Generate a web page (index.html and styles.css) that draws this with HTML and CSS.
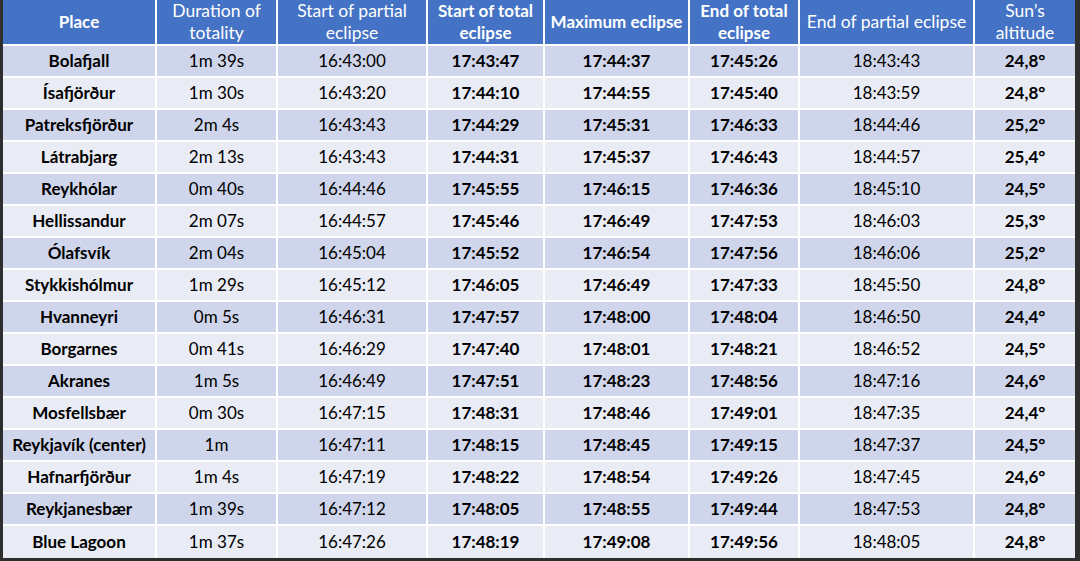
FILE: index.html
```html
<!DOCTYPE html>
<html>
<head>
<meta charset="utf-8">
<link rel="stylesheet" href="styles.css">
</head>
<body>
<div class="frame">
<table class="eclipse">
<colgroup>
<col class="c1"><col class="c2"><col class="c3"><col class="c4"><col class="c5"><col class="c6"><col class="c7"><col class="c8">
</colgroup>
<thead>
<tr>
<th class="b">Place</th>
<th>Duration of totality</th>
<th>Start of partial eclipse</th>
<th class="b">Start of total eclipse</th>
<th class="b">Maximum eclipse</th>
<th class="b">End of total eclipse</th>
<th>End of partial eclipse</th>
<th>Sun’s altitude</th>
</tr>
</thead>
<tbody>
<tr><td class="b">Bolafjall</td><td>1m 39s</td><td>16:43:00</td><td class="b">17:43:47</td><td class="b">17:44:37</td><td class="b">17:45:26</td><td>18:43:43</td><td class="b">24,8°</td></tr>
<tr><td class="b">Ísafjörður</td><td>1m 30s</td><td>16:43:20</td><td class="b">17:44:10</td><td class="b">17:44:55</td><td class="b">17:45:40</td><td>18:43:59</td><td class="b">24,8°</td></tr>
<tr><td class="b">Patreksfjörður</td><td>2m 4s</td><td>16:43:43</td><td class="b">17:44:29</td><td class="b">17:45:31</td><td class="b">17:46:33</td><td>18:44:46</td><td class="b">25,2°</td></tr>
<tr><td class="b">Látrabjarg</td><td>2m 13s</td><td>16:43:43</td><td class="b">17:44:31</td><td class="b">17:45:37</td><td class="b">17:46:43</td><td>18:44:57</td><td class="b">25,4°</td></tr>
<tr><td class="b">Reykhólar</td><td>0m 40s</td><td>16:44:46</td><td class="b">17:45:55</td><td class="b">17:46:15</td><td class="b">17:46:36</td><td>18:45:10</td><td class="b">24,5°</td></tr>
<tr><td class="b">Hellissandur</td><td>2m 07s</td><td>16:44:57</td><td class="b">17:45:46</td><td class="b">17:46:49</td><td class="b">17:47:53</td><td>18:46:03</td><td class="b">25,3°</td></tr>
<tr><td class="b">Ólafsvík</td><td>2m 04s</td><td>16:45:04</td><td class="b">17:45:52</td><td class="b">17:46:54</td><td class="b">17:47:56</td><td>18:46:06</td><td class="b">25,2°</td></tr>
<tr><td class="b">Stykkishólmur</td><td>1m 29s</td><td>16:45:12</td><td class="b">17:46:05</td><td class="b">17:46:49</td><td class="b">17:47:33</td><td>18:45:50</td><td class="b">24,8°</td></tr>
<tr><td class="b">Hvanneyri</td><td>0m 5s</td><td>16:46:31</td><td class="b">17:47:57</td><td class="b">17:48:00</td><td class="b">17:48:04</td><td>18:46:50</td><td class="b">24,4°</td></tr>
<tr><td class="b">Borgarnes</td><td>0m 41s</td><td>16:46:29</td><td class="b">17:47:40</td><td class="b">17:48:01</td><td class="b">17:48:21</td><td>18:46:52</td><td class="b">24,5°</td></tr>
<tr><td class="b">Akranes</td><td>1m 5s</td><td>16:46:49</td><td class="b">17:47:51</td><td class="b">17:48:23</td><td class="b">17:48:56</td><td>18:47:16</td><td class="b">24,6°</td></tr>
<tr><td class="b">Mosfellsbær</td><td>0m 30s</td><td>16:47:15</td><td class="b">17:48:31</td><td class="b">17:48:46</td><td class="b">17:49:01</td><td>18:47:35</td><td class="b">24,4°</td></tr>
<tr><td class="b">Reykjavík (center)</td><td>1m</td><td>16:47:11</td><td class="b">17:48:15</td><td class="b">17:48:45</td><td class="b">17:49:15</td><td>18:47:37</td><td class="b">24,5°</td></tr>
<tr><td class="b">Hafnarfjörður</td><td>1m 4s</td><td>16:47:19</td><td class="b">17:48:22</td><td class="b">17:48:54</td><td class="b">17:49:26</td><td>18:47:45</td><td class="b">24,6°</td></tr>
<tr><td class="b">Reykjanesbær</td><td>1m 39s</td><td>16:47:12</td><td class="b">17:48:05</td><td class="b">17:48:55</td><td class="b">17:49:44</td><td>18:47:53</td><td class="b">24,8°</td></tr>
<tr><td class="b">Blue Lagoon</td><td>1m 37s</td><td>16:47:26</td><td class="b">17:48:19</td><td class="b">17:49:08</td><td class="b">17:49:56</td><td>18:48:05</td><td class="b">24,8°</td></tr>
</tbody>
</table>
</div>
</body>
</html>
```
FILE: styles.css
```css
html, body {
  margin: 0;
  padding: 0;
  background: #2e2e2e;
}
body {
  width: 1080px;
  height: 561px;
  overflow: hidden;
}
.frame {
  padding: 0 5px 4px 3px;
}
.eclipse {
  width: 1072px;
  table-layout: fixed;
  border-collapse: separate;
  border-spacing: 0;
  font-family: Lato, "Liberation Sans", sans-serif;
  font-size: 17px;
  color: #000;
}
.c1 { width: 154px; }
.c2 { width: 121px; }
.c3 { width: 150px; }
.c4 { width: 117px; }
.c5 { width: 145px; }
.c6 { width: 110px; }
.c7 { width: 175px; }
.c8 { width: 100px; }
.eclipse th, .eclipse td {
  padding: 0 3px;
  text-align: center;
  vertical-align: middle;
  border-right: 2px solid #fff;
  border-bottom: 2px solid #fff;
  box-sizing: border-box;
}
.eclipse th:last-child, .eclipse td:last-child {
  border-right: none;
}
.eclipse th {
  height: 45px;
  background: #4472c4;
  color: #fff;
  font-size: 17.5px;
  font-weight: 400;
  line-height: 22px;
}
.eclipse th.b {
  font-size: 17px;
}
.eclipse td {
  height: 32px;
  line-height: 20px;
}
.eclipse tbody tr:nth-child(odd) td { background: #cfd5ea; }
.eclipse tbody tr:nth-child(even) td { background: #e9ebf5; }
.eclipse tbody tr:last-child td { border-bottom: none; }
.eclipse .b { font-weight: 700; }
```
